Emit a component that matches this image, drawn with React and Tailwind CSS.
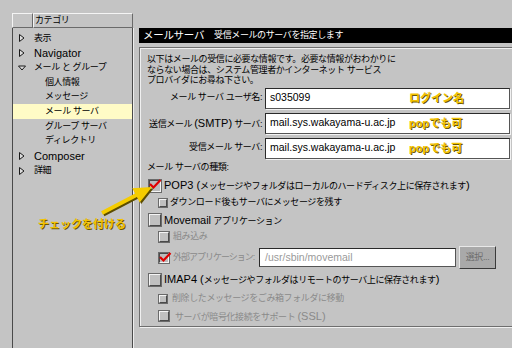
import React from 'react';

const J = 'text-[9px] tracking-[-0.4px]';
const L = 'text-[11px] tracking-normal';

const tree = [
  { label: '表示', arrow: 'right' },
  { label: 'Navigator', arrow: 'right', latin: true },
  { label: 'メール と グループ', arrow: 'down' },
  { label: '個人情報', child: true },
  { label: 'メッセージ', child: true },
  { label: 'メール サーバ', child: true, active: true },
  { label: 'グループ サーバ', child: true },
  { label: 'ディレクトリ', child: true },
  { label: 'Composer', arrow: 'right', latin: true },
  { label: '詳細', arrow: 'right' },
];

function Tri({ open }) {
  return (
    <svg width="8" height="8" viewBox="0 0 8 8" className="shrink-0">
      {open ? (
        <polygon points="0.5,2 7.5,2 4,6" fill="#dcdcdc" stroke="#1a1a1a" strokeWidth="1" />
      ) : (
        <polygon points="1.5,0.5 6,4 1.5,7.5" fill="#dcdcdc" stroke="#1a1a1a" strokeWidth="1" />
      )}
    </svg>
  );
}

function Box({ size, checked }) {
  const dims =
    size === 'lg' ? 'w-[12px] h-[12px]' : size === 'md' ? 'w-[10px] h-[10px]' : 'w-[8px] h-[8px]';
  const bevel = checked
    ? 'border-t-[#4a4a4a] border-l-[#4a4a4a] border-b-[#f4f4f4] border-r-[#f4f4f4] bg-[#bcbcbc]'
    : 'border-t-[#f4f4f4] border-l-[#f4f4f4] border-b-[#4a4a4a] border-r-[#4a4a4a] bg-[#c0c0c0]';
  return (
    <span className={`relative shrink-0 border ${dims} ${bevel} outline outline-1 outline-[#6a6a6a]`}>
      {checked && (
        <svg width="12" height="12" viewBox="0 0 12 12" className="absolute -left-[1px] -top-[2px] overflow-visible">
          <path d="M1 5 L4.5 8.5 L11.5 1" fill="none" stroke="#e00000" strokeWidth="2.2" />
        </svg>
      )}
    </span>
  );
}

function Field({ children }) {
  return (
    <div className="h-[21px] w-[245px] bg-white border border-t-[#2a2a2a] border-l-[#2a2a2a] border-b-[#555] border-r-[#555] shadow-[1px_1px_0_#f2f2f2] flex items-center pl-[4px]">
      {children}
    </div>
  );
}

function Note({ children }) {
  return (
    <span className="font-bold text-[11px] text-[#f2c200] [text-shadow:1px_1px_0_#6b5800] whitespace-nowrap">{children}</span>
  );
}

export default function App() {
  return (
    <div className="relative w-[512px] h-[348px] overflow-hidden bg-[#c4c4c4] flex pt-[13px] pl-[12px] font-['Liberation_Sans','Noto_Sans_CJK_JP',sans-serif] text-black">
      {/* category tree */}
      <div className="w-[121px] shrink-0 flex flex-col">
        <div className="h-[15px] flex">
          <div className="w-[21px] border border-t-[#f4f4f4] border-l-[#f4f4f4] border-b-[#6a6a6a] border-r-[#6a6a6a]" />
          <div className={`flex-1 flex items-center pl-[1px] border border-t-[#f4f4f4] border-l-[#f4f4f4] border-b-[#6a6a6a] border-r-[#6a6a6a] ${J}`}>
            カテゴリ
          </div>
        </div>
        <div className="flex-1 border-l border-r border-[#4a4a4a] shadow-[1px_0_0_#eeeeee] pt-[3px]">
          {tree.map((t) => (
            <div
              key={t.label}
              className={`h-[14.7px] flex items-center ${t.child ? 'pl-[32px]' : 'pl-[5px]'} ${t.active ? 'bg-[#fffbc6]' : ''}`}
            >
              {t.arrow && <Tri open={t.arrow === 'down'} />}
              <span className={`${t.arrow ? 'ml-[8px]' : ''} ${t.latin ? L : J}`}>{t.label}</span>
            </div>
          ))}
        </div>
      </div>

      {/* mail server pane */}
      <div className="ml-[6px] mt-[15px] w-[378px] shrink-0 flex flex-col">
        <div className="h-[15px] bg-black text-white flex items-center pl-[4px]">
          <span className="text-[10.5px] tracking-[-0.3px]">メールサーバ</span>
          <span className={`ml-[10px] ${J}`}>受信メールのサーバを指定します</span>
        </div>
        <div className="mt-[4px] h-[280px] border border-[#6e6e6e] shadow-[inset_1px_1px_0_#f0f0f0,1px_1px_0_#f0f0f0] pt-[6px] pl-[7px] flex flex-col">
          <p className={`${J} leading-[10.5px]`}>
            以下はメールの受信に必要な情報です。必要な情報がおわかりに
            <br />
            ならない場合は、システム管理者かインターネット サービス
            <br />
            プロバイダにお尋ね下さい。
          </p>

          <div className="mt-[2px] grid grid-cols-[115px_245px] gap-x-[3px] gap-y-[4px] items-center">
            <span className={`text-right ${J}`}>メール サーバ ユーザ名:</span>
            <Field>
              <span className="text-[10.5px] w-[139px]">s035099</span>
              <Note>ログイン名</Note>
            </Field>
            <span className={`text-right ${J}`}>
              送信メール <span className={L}>(SMTP)</span> サーバ:
            </span>
            <Field>
              <span className="text-[10.5px] w-[139px]">mail.sys.wakayama-u.ac.jp</span>
              <Note>popでも可</Note>
            </Field>
            <span className={`text-right ${J}`}>受信メール サーバ:</span>
            <Field>
              <span className="text-[10.5px] w-[139px]">mail.sys.wakayama-u.ac.jp</span>
              <Note>popでも可</Note>
            </Field>
          </div>

          <div className={`mt-[2px] h-[14px] flex items-center ${J}`}>メール サーバの種類:</div>

          <div className="mt-[2px] h-[18px] flex items-center pl-[2px] gap-[3px]">
            <Box size="lg" checked />
            <span className={J}>
              <span className={L}>POP3 (</span>メッセージやフォルダはローカルのハードディスク上に保存されます<span className={L}>)</span>
            </span>
          </div>
          <div className="h-[17px] flex items-center pl-[12px] gap-[3px]">
            <Box size="sm" />
            <span className={J}>ダウンロード後もサーバにメッセージを残す</span>
          </div>
          <div className="h-[17px] flex items-center pl-[2px] gap-[3px]">
            <Box size="lg" />
            <span className={J}>
              <span className={L}>Movemail</span> アプリケーション
            </span>
          </div>
          <div className="h-[17px] flex items-center pl-[12px] gap-[4px]">
            <Box size="md" />
            <span className={`${J} text-[#8a8a8a]`}>組み込み</span>
          </div>
          <div className="h-[24px] flex items-center pl-[12px]">
            <Box size="md" checked />
            <span className="ml-[4px] w-[86px] shrink-0 whitespace-nowrap text-[9px] tracking-[-1px] text-[#8a8a8a]">外部アプリケーション:</span>
            <div className="h-[19px] w-[197px] shrink-0 bg-white border border-t-[#2a2a2a] border-l-[#2a2a2a] border-b-[#555] border-r-[#555] flex items-center pl-[5px]">
              <span className="text-[10.5px] text-[#9a9a9a]">/usr/sbin/movemail</span>
            </div>
            <button className="ml-[3px] h-[23px] w-[37px] shrink-0 bg-[#a9a9a9] border border-t-[#e8e8e8] border-l-[#e8e8e8] border-b-[#3a3a3a] border-r-[#3a3a3a] flex items-center justify-center">
              <span className={`${J} text-[#6e6e6e]`}>選択...</span>
            </button>
          </div>
          <div className="h-[20px] flex items-center pl-[2px] gap-[3px]">
            <Box size="lg" />
            <span className={J}>
              <span className={L}>IMAP4 (</span>メッセージやフォルダはリモートのサーバ上に保存されます<span className={L}>)</span>
            </span>
          </div>
          <div className="h-[18px] flex items-center pl-[12px] gap-[5px]">
            <Box size="sm" />
            <span className={`${J} text-[#8a8a8a]`}>削除したメッセージをごみ箱フォルダに移動</span>
          </div>
          <div className="h-[17px] flex items-center pl-[12px] gap-[6px]">
            <Box size="md" />
            <span className={`${J} text-[#8a8a8a]`}>
              サーバが暗号化接続をサポート <span className={L}>(SSL)</span>
            </span>
          </div>
        </div>
      </div>

      {/* annotation */}
      <svg width="70" height="42" viewBox="0 0 70 42" className="absolute left-[95px] top-[180px]">
        <polygon
          points="6.1,31.2 40.1,13.5 37.3,8.2 57,7 44.7,22.4 41.9,17.1 7.9,34.8"
          transform="translate(1.5,1.5)"
          fill="#5c4d00"
        />
        <polygon points="6.1,31.2 40.1,13.5 37.3,8.2 57,7 44.7,22.4 41.9,17.1 7.9,34.8" fill="#f5cc00" />
      </svg>
      <div className="absolute left-[38px] top-[216px] leading-[14px]">
        <Note>チェックを付ける</Note>
      </div>
    </div>
  );
}
